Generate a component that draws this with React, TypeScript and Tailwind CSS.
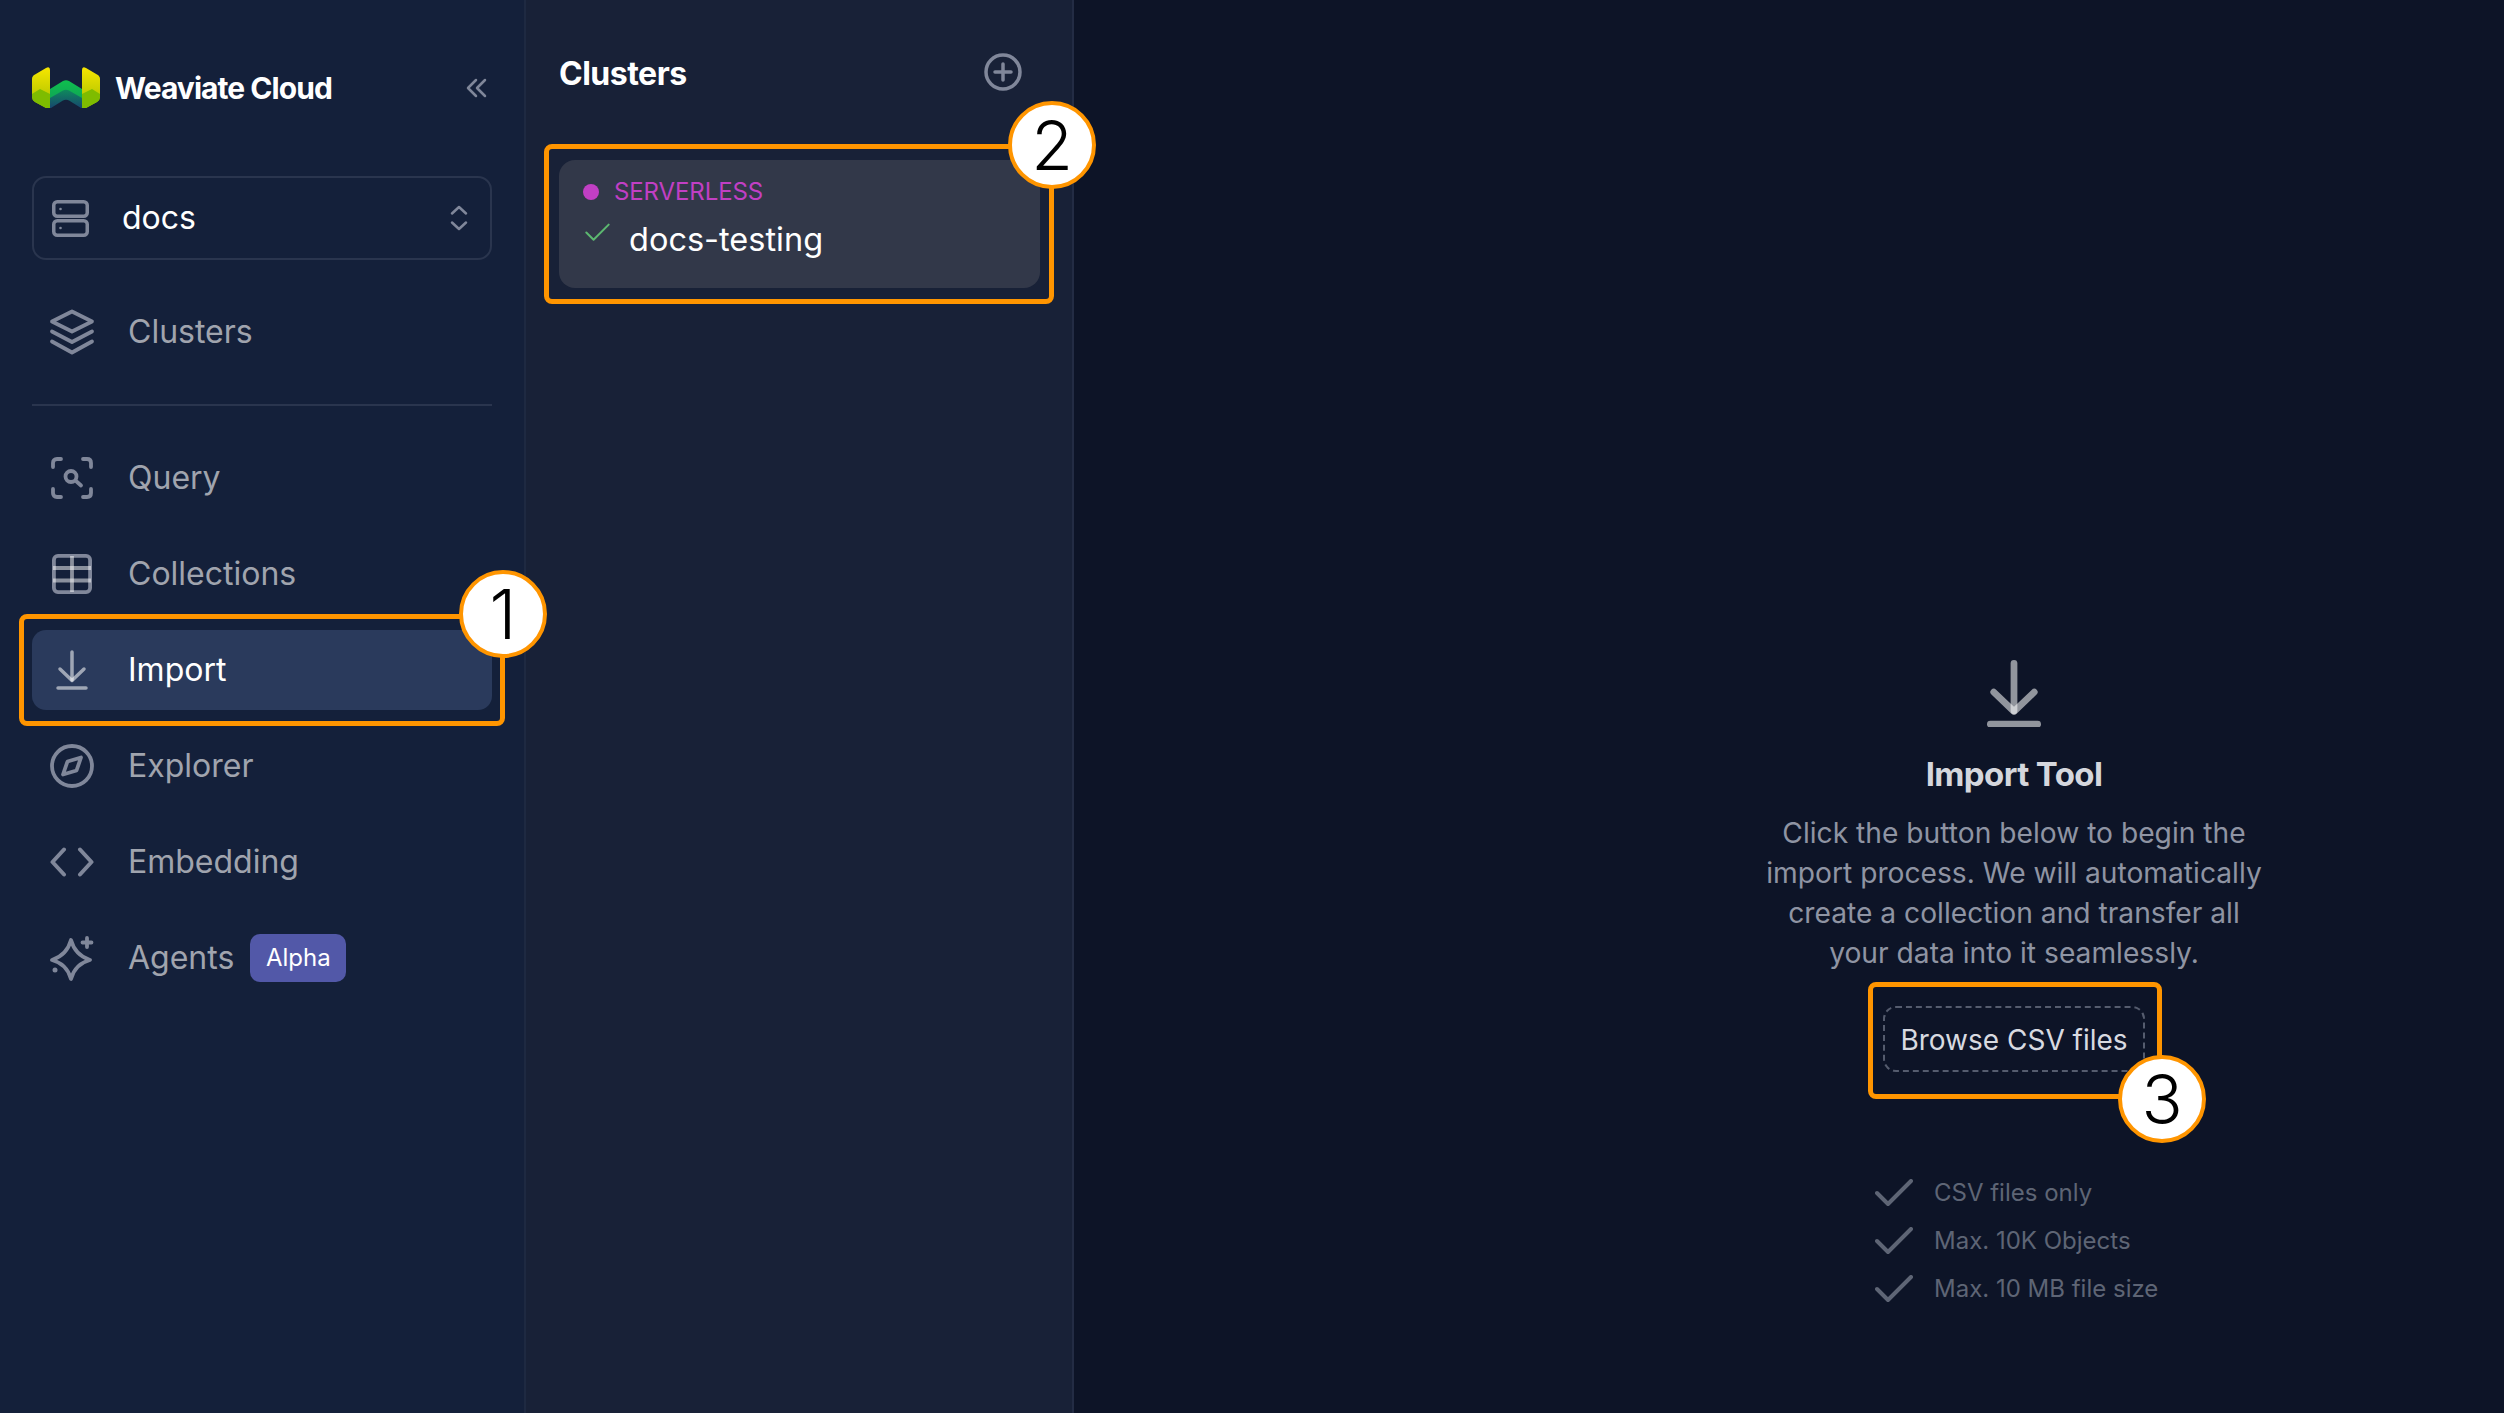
import React from "react";

const font = { fontFamily: '"Inter", "Noto Sans", sans-serif' };

function Marker({ n, className }: { n: string; className: string }) {
  return (
    <div className={`absolute z-20 flex h-[88px] w-[88px] items-center justify-center rounded-full border-[4px] border-[#ff9500] bg-white text-[68px] font-light leading-none text-black ${className}`}>
      {n}
    </div>
  );
}

const ico = "shrink-0";
const G = "#80879a";

function Logo() {
  return (
    <svg width="68" height="42" viewBox="0 0 68 42" className={ico}>
      <defs>
        <linearGradient id="ly" x1="0" y1="0" x2="0" y2="1">
          <stop offset="0" stopColor="#f7e600" />
          <stop offset="0.55" stopColor="#c9d000" />
          <stop offset="1" stopColor="#93c400" />
        </linearGradient>
        <linearGradient id="lg" x1="0" y1="0" x2="0" y2="1">
          <stop offset="0" stopColor="#0fbf4e" />
          <stop offset="1" stopColor="#0f9a58" />
        </linearGradient>
        <linearGradient id="lb" x1="0" y1="0" x2="0" y2="1">
          <stop offset="0" stopColor="#0e8a5c" />
          <stop offset="1" stopColor="#17466e" />
        </linearGradient>
      </defs>
      <path d="M0 12Q0 9 3 7.500L14 1Q18-1 18 3L18 41L14 41L3 35Q0 33 0 30Z" fill="url(#ly)" />
      <path d="M68 12Q68 9 65 7.500L54 1Q50-1 50 3L50 41L54 41L65 35Q68 33 68 30Z" fill="url(#ly)" />
      <path d="M0 27L8 22L18 27L18 41L14 41L3 35Q0 33 0 30Z" fill="#7ebc00" />
      <path d="M68 27L60 22L50 27L50 41L54 41L65 35Q68 33 68 30Z" fill="#7ebc00" />
      <path d="M18 22L31 14Q34 12.500 37 14L50 22L50 41L18 41Z" fill="url(#lg)" />
      <path d="M18 31L31 23.500Q34 22 37 23.500L50 31L50 41L18 41Z" fill="url(#lb)" />
      <path d="M19 41L31 33.500Q34 32 37 33.500L49 41Z" fill="#14203a" />
    </svg>
  );
}

function ServerIcon() {
  return (
    <svg width="37" height="37" viewBox="0 0 37 37" fill="none" stroke={G} strokeWidth="3.500" className={ico}>
      <rect x="1.750" y="1.750" width="33.500" height="14.500" rx="3.500" />
      <rect x="1.750" y="20.750" width="33.500" height="14.500" rx="3.500" />
      <circle cx="8.500" cy="9" r="1.300" fill={G} stroke="none" />
      <circle cx="8.500" cy="28" r="1.300" fill={G} stroke="none" />
    </svg>
  );
}

function LayersIcon() {
  return (
    <svg width="46" height="46" viewBox="0 0 46 46" fill="none" stroke={G} strokeWidth="3.800" strokeLinejoin="round" strokeLinecap="round" className={ico}>
      <path d="M23 2.500L43 12.500L23 22.500L3 12.500Z" />
      <path d="M3 22.500L23 33L43 22.500" />
      <path d="M3 32.500L23 43.500L43 32.500" />
    </svg>
  );
}

function QueryIcon() {
  return (
    <svg width="42" height="42" viewBox="0 0 42 42" fill="none" stroke={G} strokeWidth="3.800" strokeLinecap="round" className={ico}>
      <path d="M2 10V6Q2 2 6 2H10" />
      <path d="M32 2H36Q40 2 40 6V10" />
      <path d="M40 32V36Q40 40 36 40H32" />
      <path d="M10 40H6Q2 40 2 36V32" />
      <circle cx="20" cy="19.500" r="5.500" />
      <path d="M25 24L30 28.500" />
    </svg>
  );
}

function TableIcon() {
  return (
    <svg width="40" height="40" viewBox="0 0 40 40" fill="none" strokeWidth="3.800" className={ico}>
      <rect x="1.900" y="1.900" width="36.200" height="36.200" rx="4" stroke={G} />
      <path d="M1 14H39M1 26.500H39" stroke="#ffffff" strokeOpacity="0.5" />
      <path d="M20 2V38" stroke="#ffffff" strokeOpacity="0.5" />
    </svg>
  );
}

function ImportIcon({ size, sw }: { size: number; sw: number }) {
  return (
    <svg width={size} height={size * 1.25} viewBox="0 0 32 40" fill="none" strokeLinecap="round" strokeLinejoin="round" stroke="#ffffff" strokeOpacity="0.55" strokeWidth={sw} className={ico}>
      <path d="M16 2V30" />
      <path d="M4 19L16 30.500L28 19" />
      <path d="M2 38H30" />
    </svg>
  );
}

function CompassIcon() {
  return (
    <svg width="44" height="44" viewBox="0 0 44 44" fill="none" stroke={G} strokeWidth="3.800" strokeLinejoin="round" className={ico}>
      <circle cx="22" cy="22" r="20" />
      <path d="M31 13.500L26.500 26.500L13 30.500L17.500 17.500Z" />
    </svg>
  );
}

function CodeIcon() {
  return (
    <svg width="44" height="30" viewBox="0 0 44 30" fill="none" stroke={G} strokeWidth="4" strokeLinecap="round" strokeLinejoin="round" className={ico}>
      <path d="M14 2.500L2.500 15L14 27.500" />
      <path d="M30 2.500L41.500 15L30 27.500" />
    </svg>
  );
}

function SparkleIcon() {
  return (
    <svg width="46" height="46" viewBox="0 0 46 46" fill="none" stroke={G} strokeWidth="3.800" strokeLinejoin="round" strokeLinecap="round" className={ico}>
      <path d="M22 5Q26 20 41 25Q26 29 22 44Q18 29 3 25Q18 20 22 5Z" />
      <path d="M38 3V12M33.500 7.500H42.500" />
      <circle cx="6" cy="35" r="2.500" fill={G} stroke="none" />
    </svg>
  );
}

function Check({ className, color, w, h, sw }: { className?: string; color: string; w: number; h: number; sw: number }) {
  return (
    <svg width={w} height={h} viewBox="0 0 38 28" fill="none" stroke={color} strokeWidth={sw} strokeLinecap="round" strokeLinejoin="round" className={`${ico} ${className ?? ""}`}>
      <path d="M2 14L13 25L36 2" />
    </svg>
  );
}

function NavRow({ icon, label, active, children }: { icon: React.ReactNode; label: string; active?: boolean; children?: React.ReactNode }) {
  return (
    <div className={`relative flex h-[80px] items-center rounded-[14px] ${active ? "bg-[#2a3a5c] text-white" : "text-[#a0a4ae]"}`}>
      <div className="flex w-[96px] shrink-0 items-center justify-center pr-[16px]">{icon}</div>
      <span className="text-[32px] leading-[48px]">{label}</span>
      {children}
    </div>
  );
}

export default function App() {
  return (
    <div className="flex h-[1413px] w-full overflow-hidden bg-[#0d1427]" style={font}>
      <aside className="h-full w-[526px] shrink-0 border-r-2 border-[#1e2941] bg-[#14203a] px-[32px]">
        <div className="flex h-[176px] items-center">
          <Logo />
          <span className="ml-[15px] text-[30px] font-bold tracking-[-0.95px] text-white">Weaviate Cloud</span>
          <svg width="22" height="20" viewBox="0 0 22 20" fill="none" stroke={G} strokeWidth="2.500" strokeLinecap="round" strokeLinejoin="round" className="ml-auto mr-[5px]">
            <path d="M11 2L3 10L11 18" />
            <path d="M20 2L12 10L20 18" />
          </svg>
        </div>
        <div className="flex h-[84px] items-center rounded-[14px] border-2 border-[#2a354e] pl-[18px] pr-[22px]">
          <ServerIcon />
          <span className="ml-[33px] text-[32px] text-white">docs</span>
          <svg width="18" height="26" viewBox="0 0 18 26" fill="none" stroke={G} strokeWidth="2.500" strokeLinecap="round" strokeLinejoin="round" className="ml-auto">
            <path d="M2 8.500L9 2L16 8.500" />
            <path d="M2 17.500L9 24L16 17.500" />
          </svg>
        </div>
        <div className="mt-[32px]">
          <NavRow icon={<LayersIcon />} label="Clusters" />
        </div>
        <div className="mt-[32px] h-[2px] bg-[#2a354e]" />
        <nav className="mt-[32px] flex flex-col gap-4">
          <NavRow icon={<QueryIcon />} label="Query" />
          <NavRow icon={<TableIcon />} label="Collections" />
          <NavRow icon={<ImportIcon size={32} sw={3.5} />} label="Import" active>
            <div className="absolute inset-x-[-13px] inset-y-[-16px] rounded-[8px] border-[5px] border-[#ff9500]" />
            <Marker n="1" className="right-[-55px] top-[-60px]" />
          </NavRow>
          <NavRow icon={<CompassIcon />} label="Explorer" />
          <NavRow icon={<CodeIcon />} label="Embedding" />
          <NavRow icon={<SparkleIcon />} label="Agents">
            <span className="ml-[16px] flex h-[48px] w-[96px] items-center justify-center rounded-[10px] bg-[#5258a8] text-[24px] text-white">Alpha</span>
          </NavRow>
        </nav>
      </aside>

      <section className="h-full w-[548px] shrink-0 border-r-2 border-[#232c44] bg-[#182137] pl-[33px] pr-[32px]">
        <div className="flex h-[146px] items-center justify-between">
          <h2 className="mt-[2px] text-[32px] font-bold tracking-[-0.5px] text-white">Clusters</h2>
          <svg width="38" height="38" viewBox="0 0 38 38" fill="none" stroke={G} strokeWidth="3.500" strokeLinecap="round" className="mb-[3px] mr-[18px]">
            <circle cx="19" cy="19" r="17" />
            <path d="M19 11V27M11 19H27" />
          </svg>
        </div>
        <div className="relative mt-[14px] h-[128px] rounded-[16px] bg-[#323849] pl-[24px] pt-[20px]">
          <div className="flex h-[24px] items-center">
            <span className="h-[16px] w-[16px] rounded-full bg-[#c13fc4]" />
            <span className="ml-[15px] text-[24px] tracking-[-0.1px] text-[#c13fc4]">SERVERLESS</span>
          </div>
          <div className="mt-[12px] flex h-[48px]">
            <Check color="#5cb870" w={25} h={19} sw={3} className="ml-[2px] mt-[7px]" />
            <span className="ml-[19px] text-[32.5px] leading-[48px] text-white">docs-testing</span>
          </div>
          <div className="absolute left-[-15px] right-[-14px] inset-y-[-16px] rounded-[8px] border-[5px] border-[#ff9500]" />
          <Marker n="2" className="right-[-56px] top-[-59px]" />
        </div>
      </section>

      <main className="flex h-full flex-1 flex-col items-center pl-[450px] pt-[660px]">
        <div className="flex h-[67px] items-center">
          <ImportIcon size={54} sw={4} />
        </div>
        <h3 className="mt-[23px] text-[33px] font-bold leading-[48px] tracking-[-0.6px] text-[#d5d7dd]">Import Tool</h3>
        <p className="mt-[15px] w-[540px] text-center text-[28.2px] leading-[40px] text-[#8f94a3]">
          Click the button below to begin the
          <br />
          import process. We will automatically
          <br />
          create a collection and transfer all
          <br />
          your data into it seamlessly.
        </p>
        <div className="relative mt-[33px] flex h-[66px] w-[262px] items-center justify-center rounded-[13px] border-2 border-dashed border-[#555c6e] pt-[1px] text-[28px] text-[#d8dae0]">
          Browse CSV files
          <div className="absolute bottom-[-29px] left-[-17px] right-[-19px] top-[-26px] rounded-[8px] border-[5px] border-[#ff9500]" />
          <Marker n="3" className="right-[-63px] top-[47px]" />
        </div>
        <ul className="mt-[97px] w-[278px] text-[24px] text-[#5e6575]">
          {["CSV files only", "Max. 10K Objects", "Max. 10 MB file size"].map((t) => (
            <li key={t} className="flex h-[48px] items-center gap-[21px] whitespace-nowrap">
              <Check color="#5e6575" w={38} h={28} sw={4} />
              {t}
            </li>
          ))}
        </ul>
      </main>
    </div>
  );
}
